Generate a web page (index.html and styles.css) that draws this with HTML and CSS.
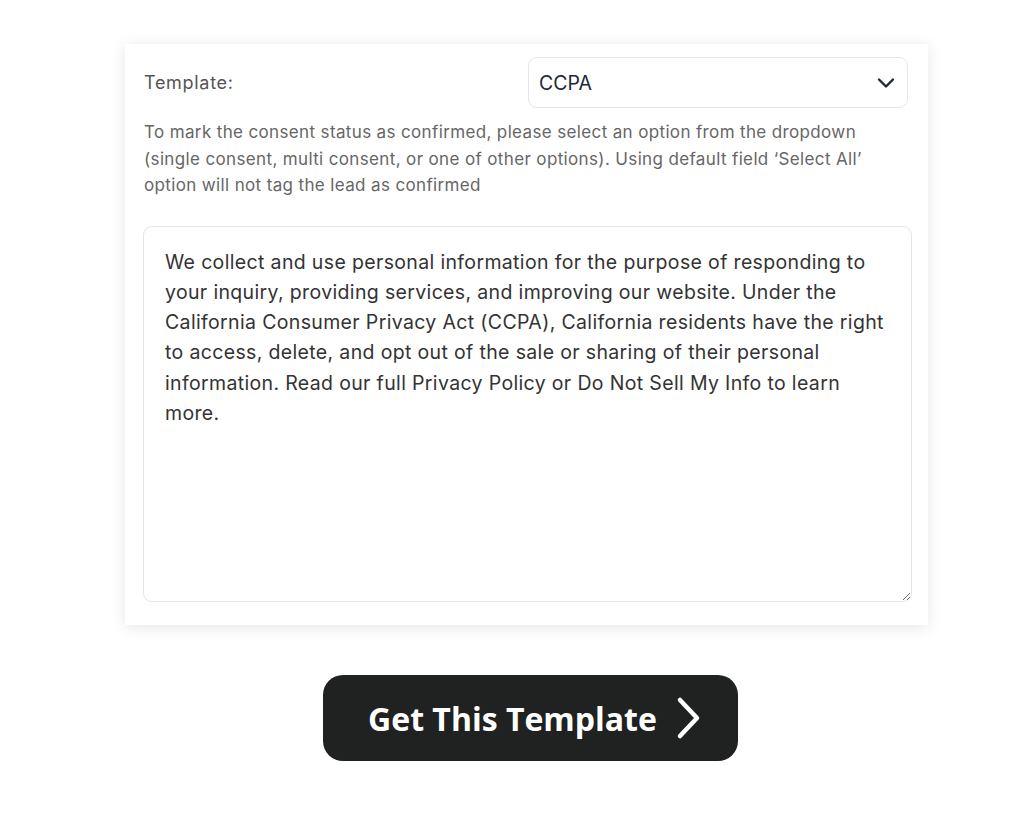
FILE: index.html
```html
<!DOCTYPE html>
<html>
<head>
<meta charset="utf-8">
<link rel="stylesheet" href="styles.css">
</head>
<body>
<main class="page">
  <section class="card">
    <div class="row">
      <label class="label">Template:</label>
      <div class="select">
        <span class="select-value">CCPA</span>
        <svg class="chev" width="18" height="12" viewBox="0 0 18 12"><path d="M2 2.5 L9 9.5 L16 2.5" fill="none" stroke="#1f2937" stroke-width="2.4" stroke-linecap="round" stroke-linejoin="round"/></svg>
      </div>
    </div>
    <p class="help">To mark the consent status as confirmed, please select an option from the dropdown (single consent, multi consent, or one of other options). Using default field ‘Select All’ option will not tag the lead as confirmed</p>
    <textarea class="text">We collect and use personal information for the purpose of responding to your inquiry, providing services, and improving our website. Under the California Consumer Privacy Act (CCPA), California residents have the right to access, delete, and opt out of the sale or sharing of their personal information. Read our full Privacy Policy or Do Not Sell My Info to learn more.</textarea>
  </section>
  <div class="cta-wrap">
    <a class="cta" href="#">
      <span>Get This Template</span>
      <svg class="cta-chev" width="28" height="44" viewBox="0 0 28 44"><path d="M5 4 L22 22 L5 40" fill="none" stroke="#fff" stroke-width="4.5" stroke-linecap="round" stroke-linejoin="round"/></svg>
    </a>
  </div>
</main>
</body>
</html>
```
FILE: styles.css
```css
* { box-sizing: border-box; }
html, body { margin: 0; padding: 0; background: #fff; }
body { font-family: "Inter", "Liberation Sans", sans-serif; }
.page { padding-top: 44px; }
.card {
  margin-left: 125px;
  width: 803px;
  height: 581px;
  background: #fff;
  padding: 13px 16px 23px 18px;
  box-shadow: 0 2px 14px rgba(0,0,0,0.10);
  display: flex;
  flex-direction: column;
}
.row {
  display: flex;
  align-items: center;
  justify-content: space-between;
  padding-left: 1px;
  padding-right: 4px;
}
.label { font-size: 18px; letter-spacing: 0.7px; color: #555; }
.select {
  width: 380px;
  height: 51px;
  border: 1px solid #e3e6eb;
  border-radius: 9px;
  display: flex;
  align-items: center;
  justify-content: space-between;
  padding: 0 12px 0 10px;
}
.select-value { font-size: 19.5px; color: #1f2937; }
.help {
  margin: 11px 0 0 1px;
  font-size: 17px;
  letter-spacing: 0.36px;
  line-height: 26.5px;
  color: #666;
  width: 730px;
}
.text {
  margin-top: 27px;
  flex: 1;
  width: 769px;
  border: 1px solid #e2e5ec;
  border-radius: 9px;
  padding: 20px 21px;
  font-family: "Inter", "Liberation Sans", sans-serif;
  font-size: 19.5px;
  letter-spacing: 0.35px;
  line-height: 30.3px;
  color: #333;
  resize: vertical;
  outline: none;
}
.cta-wrap { padding-top: 50px; padding-left: 323px; }
.cta {
  width: 415px;
  height: 86px;
  background: #1f2220;
  border-radius: 20px;
  display: flex;
  align-items: center;
  justify-content: center;
  gap: 18px;
  text-decoration: none;
  color: #fff;
  font-family: "Open Sans", "Liberation Sans", sans-serif;
  font-weight: 700;
  font-size: 32px;
  padding-left: 10px;
}
```
